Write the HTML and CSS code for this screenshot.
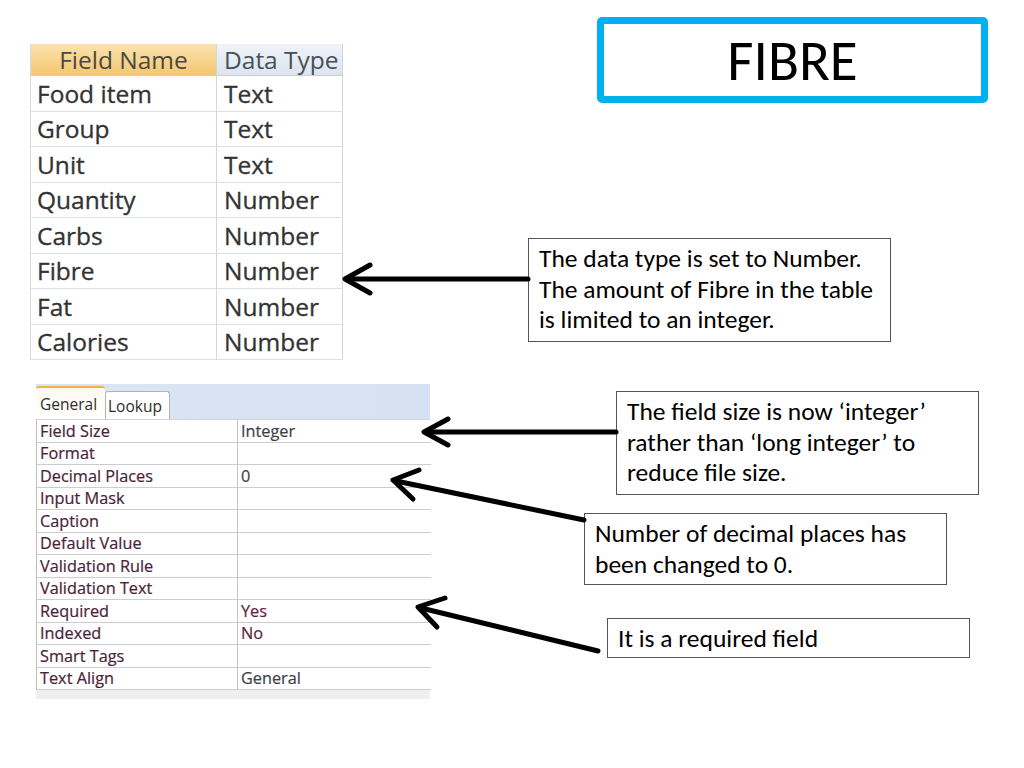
FILE: index.html
```html
<!DOCTYPE html>
<html lang="en">
<head>
  <meta charset="UTF-8" />
  <meta name="viewport" content="width=device-width, initial-scale=1.0" />
  <title>Fibre</title>
  <link rel="stylesheet" href="styles.css">
</head>
<body>
  <div class="slide">
    <div class="left">
      <div class="fields">
        <div class="head name">Field Name</div>
        <div class="head type">Data Type</div>
        <div class="cell">Food item</div><div class="cell">Text</div>
        <div class="cell">Group</div><div class="cell">Text</div>
        <div class="cell">Unit</div><div class="cell">Text</div>
        <div class="cell">Quantity</div><div class="cell">Number</div>
        <div class="cell">Carbs</div><div class="cell">Number</div>
        <div class="cell">Fibre</div><div class="cell">Number</div>
        <div class="cell">Fat</div><div class="cell">Number</div>
        <div class="cell">Calories</div><div class="cell">Number</div>
      </div>

      <div class="props">
        <div class="tabs">
          <span class="tab active">General</span>
          <span class="tab">Lookup</span>
        </div>
        <div class="prop-rows">
          <div class="label">Field Size</div><div class="value">Integer</div>
          <div class="label">Format</div><div class="value"></div>
          <div class="label">Decimal Places</div><div class="value">0</div>
          <div class="label">Input Mask</div><div class="value"></div>
          <div class="label">Caption</div><div class="value"></div>
          <div class="label">Default Value</div><div class="value"></div>
          <div class="label">Validation Rule</div><div class="value"></div>
          <div class="label">Validation Text</div><div class="value"></div>
          <div class="label">Required</div><div class="value mark">Yes</div>
          <div class="label">Indexed</div><div class="value mark">No</div>
          <div class="label">Smart Tags</div><div class="value"></div>
          <div class="label">Text Align</div><div class="value">General</div>
        </div>
        <div class="props-foot"></div>
      </div>
    </div>

    <div class="right">
      <div class="title">FIBRE</div>
      <div class="note note-type">The data type is set to Number. The amount of Fibre in the table is limited to an integer.</div>
      <div class="note note-size">The field size is now ‘integer’ rather than ‘long integer’ to reduce file size.</div>
      <div class="note note-decimal">Number of decimal places has been changed to 0.</div>
      <div class="note note-required">It is a required field</div>
    </div>

    <svg class="arrows" width="1024" height="768" viewBox="0 0 1024 768">
      <g fill="none" stroke="#000" stroke-width="5" stroke-linecap="round" stroke-linejoin="round">
        <path d="M528 279 H348" />
        <path d="M370 265 L345 279 L370 293" />
        <path d="M616 432 H428" />
        <path d="M448 419 L424 432 L448 445" />
        <path d="M584 520 L396 481" />
        <path d="M419 470 L393 480 L413 499" />
        <path d="M598 651 L421 608" />
        <path d="M445 598 L418 607 L437 627" />
      </g>
    </svg>
  </div>
</body>
</html>
```

FILE: styles.css
```css
body {
  margin: 0;
  background: #fff;
  font-family: "Open Sans", Arial, sans-serif;
}
.slide {
  position: relative;
  display: flex;
  width: 1024px;
  height: 768px;
  overflow: hidden;
  background: #fff;
}
.left {
  width: 440px;
  flex: none;
  padding: 44px 0 0 30px;
  box-sizing: border-box;
}
.right {
  flex: 1;
  padding-top: 17px;
  font-family: Carlito, Lato, "Open Sans", sans-serif;
}

/* field list */
.fields {
  display: grid;
  grid-template-columns: 186px 126px;
  grid-template-rows: 32px repeat(8, 35.5px);
  width: 312px;
  border-left: 1px solid #d3dae4;
  box-sizing: border-box;
}
.fields > div {
  display: flex;
  align-items: center;
  border-right: 1px solid #cfd6e0;
  border-bottom: 1px solid #dbe1ea;
  box-sizing: border-box;
  font-size: 24.5px;
  color: #333;
  -webkit-text-stroke: 0.3px #333;
}
.fields .head {
  justify-content: center;
  color: #4a4a40;
  border-bottom: 1px solid #c6cfdb;
  -webkit-text-stroke: 0;
}
.fields .head.name {
  background: linear-gradient(#fbe3ae, #f4c672);
}
.fields .head.type {
  background: linear-gradient(#f0f3f8, #dde4ee);
  justify-content: flex-start;
  padding-left: 7px;
  color: #46505a;
}
.fields .cell {
  padding-left: 6px;
}
.fields .cell:nth-child(even) {
  padding-left: 7px;
}

/* property sheet */
.props {
  width: 394px;
  margin: 24px 0 0 6px;
}
.tabs {
  display: flex;
  align-items: flex-end;
  height: 35px;
  background: linear-gradient(90deg, #dbe5f2, #d6e2f2);
  box-sizing: border-box;
}
.tab {
  font-size: 15.5px;
  color: #2e2e2e;
  background: #fff;
  box-sizing: border-box;
}
.tab.active {
  width: 69px;
  height: 33px;
  padding: 5px 0 0 4px;
  border-top: 2px solid #f2b04a;
  border-radius: 3px 3px 0 0;
  background: linear-gradient(#fffaf0, #fff);
}
.tab:not(.active) {
  width: 65px;
  height: 28px;
  padding: 3px 0 0 2px;
  border: 1px solid #a9b3c2;
  border-bottom: none;
  border-radius: 3px 3px 0 0;
}
.prop-rows {
  display: grid;
  grid-template-columns: 201px 193px;
  grid-auto-rows: 22.5px;
  border-left: 1px solid #bcbcbc;
  border-top: 1px solid #cfd3d8;
}
.prop-rows > div {
  display: flex;
  align-items: center;
  font-size: 16.3px;
  border-bottom: 1px solid #cdcdcd;
  box-sizing: border-box;
  white-space: nowrap;
  -webkit-text-stroke: 0.2px currentColor;
}
.prop-rows .label {
  padding-left: 3px;
  color: #4b2238;
  border-right: 1px solid #c4c4c4;
}
.prop-rows .value {
  padding-left: 3px;
  color: #3e3e46;
}
.prop-rows .value.mark {
  color: #5e2446;
}
.props-foot {
  height: 9px;
  background: #efefef;
}

/* slide text */
.title {
  display: flex;
  align-items: center;
  justify-content: center;
  width: 391px;
  height: 86px;
  margin-left: 157px;
  border: 7px solid #00b0f0;
  border-radius: 5px;
  box-sizing: border-box;
  font-size: 57px;
  color: #000;
}
.note {
  width: 363px;
  padding: 5px 10px;
  border: 1px solid #555;
  box-sizing: border-box;
  font-size: 25.5px;
  line-height: 30.5px;
  color: #000;
  background: #fff;
}
.note-type {
  height: 104px;
  margin: 135px 0 0 88px;
}
.note-size {
  height: 104px;
  margin: 49px 0 0 176px;
}
.note-decimal {
  height: 72px;
  margin: 18px 0 0 144px;
}
.note-required {
  height: 40px;
  margin: 33px 0 0 167px;
}

.arrows {
  position: absolute;
  top: 0;
  left: 0;
  pointer-events: none;
}
```
